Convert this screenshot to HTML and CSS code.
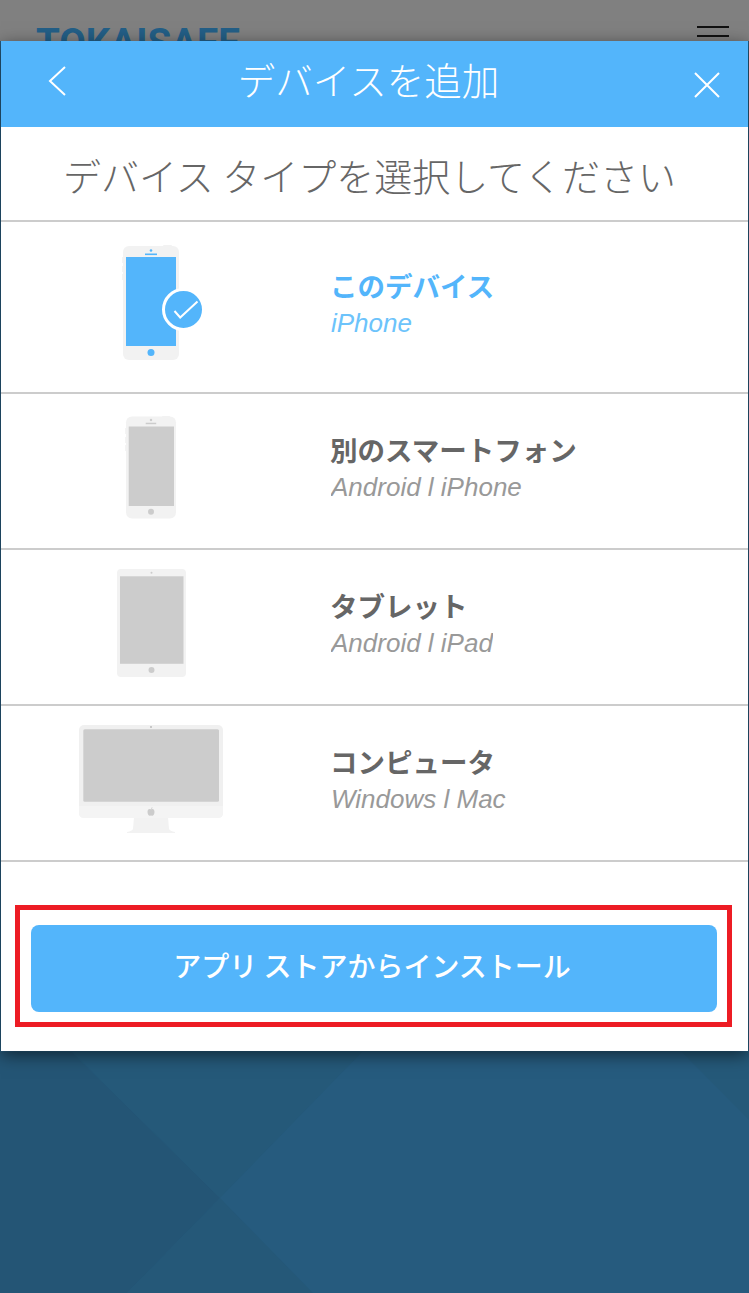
FILE: index.html
```html
<!DOCTYPE html>
<html lang="ja">
<head>
    <meta charset="UTF-8">
    <meta name="viewport" content="width=device-width, initial-scale=1.0">
    <title>デバイスを追加</title>
    <link rel="stylesheet" href="styles.css">
</head>
<body>
    <svg class="backdrop" viewBox="0 0 749 1293" aria-hidden="true">
        <polygon class="shade-left" points="0,1052 72,1052 220,1198 127,1293 0,1293"/>
        <polygon class="shade-top" points="72,1052 362,1052 220,1198"/>
        <polygon class="shade-bottom" points="220,1198 313,1293 127,1293"/>
        <polygon class="shade-top" points="682,1052 749,1052 749,1120"/>
    </svg>
    <header class="topbar">
        <span class="logo">TOKAISAFE</span>
        <div class="burger"><span></span><span></span><span></span></div>
    </header>
    <main class="modal">
        <div class="modal-head">
            <svg class="head-icon back" width="18" height="30" viewBox="0 0 18 30"><path d="M17 1 L2 15 L17 29" /></svg>
            <h1>デバイスを追加</h1>
            <svg class="head-icon" width="26" height="26" viewBox="0 0 26 26"><path d="M1 1 L25 25 M25 1 L1 25" /></svg>
        </div>
        <h2 class="prompt">デバイス タイプを選択してください</h2>

        <div class="device active first">
            <div class="device-icon">
                <svg width="84" height="116" viewBox="0 0 84 116">
                    <rect x="0.2" y="12" width="2" height="6" fill="#f2f2f2"/>
                    <rect x="0.2" y="21" width="2" height="6" fill="#f2f2f2"/>
                    <rect x="0.2" y="29" width="2" height="6" fill="#f2f2f2"/>
                    <rect x="41" y="0" width="9" height="3" rx="1" fill="#f2f2f2"/>
                    <rect x="1" y="1" width="56" height="114" rx="6" fill="#f2f2f2"/>
                    <rect x="4" y="12" width="50" height="89" fill="#53b5fb"/>
                    <circle cx="29" cy="5.5" r="1.3" fill="#53b5fb"/>
                    <rect x="23" y="8.5" width="12" height="1.6" fill="#53b5fb"/>
                    <circle cx="29" cy="107.5" r="3.5" fill="#53b5fb"/>
                    <circle cx="61.5" cy="64.5" r="20" fill="#53b5fb" stroke="#fff" stroke-width="3"/>
                    <path d="M52.5 66 L58.2 72.5 L75.5 56.5" fill="none" stroke="#fff" stroke-width="2"/>
                </svg>
            </div>
            <div class="device-text">
                <strong>このデバイス</strong>
                <em>iPhone</em>
            </div>
        </div>

        <div class="device">
            <div class="device-icon">
                <svg class="phone" width="50" height="103" viewBox="0 0 50 103">
                    <rect x="-0.8" y="12" width="2" height="6" fill="#f2f2f2"/>
                    <rect x="-0.8" y="21" width="2" height="6" fill="#f2f2f2"/>
                    <rect x="-0.8" y="29" width="2" height="6" fill="#f2f2f2"/>
                    <rect x="36" y="0" width="8" height="2" rx="1" fill="#f2f2f2"/>
                    <rect x="0" y="0.5" width="50" height="102" rx="6" fill="#f2f2f2"/>
                    <rect x="2.7" y="10.5" width="45.3" height="79.5" fill="#ccc"/>
                    <circle cx="25" cy="4" r="1.2" fill="#ccc"/>
                    <rect x="19.7" y="6.7" width="10.5" height="1.5" fill="#ccc"/>
                    <circle cx="25" cy="95.8" r="3" fill="#ccc"/>
                </svg>
            </div>
            <div class="device-text">
                <strong>別のスマートフォン</strong>
                <em>Android l iPhone</em>
            </div>
        </div>

        <div class="device">
            <div class="device-icon">
                <svg width="69" height="108" viewBox="0 0 69 108">
                    <rect x="0" y="0" width="69" height="108" rx="4" fill="#f2f2f2"/>
                    <rect x="3" y="7.3" width="63.5" height="87.5" fill="#ccc"/>
                    <circle cx="34.5" cy="3.7" r="1" fill="#ccc"/>
                    <circle cx="34.5" cy="101" r="3" fill="#ccc"/>
                </svg>
            </div>
            <div class="device-text">
                <strong>タブレット</strong>
                <em>Android l iPad</em>
            </div>
        </div>

        <div class="device">
            <div class="device-icon">
                <svg width="144" height="108" viewBox="0 0 144 108">
                    <path d="M55 92 H89 L90 104 Q91 106 96 107 V108 H48 V107 Q53 106 54 104 Z" fill="#f2f2f2"/>
                    <rect x="0" y="0" width="144" height="93" rx="5" fill="#f0f0f0"/>
                    <path d="M0 81 H144 V88 Q144 93 139 93 H5 Q0 93 0 88 Z" fill="#f4f4f4"/>
                    <rect x="4.3" y="4.3" width="135.7" height="72.4" rx="1.5" fill="#ccc"/>
                    <circle cx="72" cy="2" r="1" fill="#bbb"/>
                    <path d="M72 84.5 C70 83.5 68.5 84.5 68.5 87 C68.5 89.5 70 91 71 90.7 L72 90.4 L73 90.7 C74 91 75.5 89.5 75.5 87 C75.5 84.5 74 83.5 72 84.5 Z M72 84 C72 83 72.6 82.4 73.5 82.2 C73.5 83.2 73 83.9 72 84 Z" fill="#ccc"/>
                </svg>
            </div>
            <div class="device-text">
                <strong>コンピュータ</strong>
                <em>Windows l Mac</em>
            </div>
        </div>

        <div class="callout">
            <button class="install">アプリ ストアからインストール</button>
        </div>
    </main>
</body>
</html>
```

FILE: styles.css
```css
html, body {
    margin: 0;
    padding: 0;
}
body {
    position: relative;
    width: 749px;
    height: 1293px;
    overflow: hidden;
    background: #265b7e;
    font-family: "Noto Sans CJK JP", "Liberation Sans", sans-serif;
}
h1, h2 {
    margin: 0;
    font-weight: 300;
}

.backdrop {
    position: absolute;
    top: 0;
    left: 0;
    width: 749px;
    height: 1293px;
}
.shade-left {
    fill: #245575;
}
.shade-top {
    fill: #255979;
}
.shade-bottom {
    fill: #255878;
}

.topbar {
    position: relative;
    height: 41px;
    overflow: hidden;
    background: #808080;
}
.logo {
    position: absolute;
    left: 36px;
    top: 23px;
    font-family: Roboto, "Liberation Sans", sans-serif;
    font-size: 38.5px;
    font-weight: 700;
    line-height: 40px;
    color: #235f87;
}
.burger {
    position: absolute;
    left: 697px;
    top: 26px;
}
.burger span {
    display: block;
    width: 32px;
    height: 2px;
    margin-bottom: 7px;
    background: #111;
}

.modal {
    position: relative;
    margin: 0 1px;
    width: 747px;
    height: 1010px;
    background: #fff;
    box-shadow: 0 4px 16px rgba(0, 0, 0, 0.55);
}
.modal-head {
    display: flex;
    align-items: center;
    justify-content: space-between;
    height: 86px;
    padding: 0 28px 0 47px;
    box-sizing: border-box;
    background: #53b5fb;
    color: #fff;
}
.modal-head h1 {
    font-size: 37.5px;
    line-height: 76px;
    margin: 0 0 10px -23px;
}
.head-icon {
    fill: none;
    stroke: #fff;
    stroke-width: 2;
    margin-top: 2px;
}
.head-icon.back {
    margin-top: -6px;
}
.prompt {
    height: 95px;
    box-sizing: border-box;
    padding-right: 10px;
    border-bottom: 2px solid #ccc;
    font-size: 38px;
    line-height: 96px;
    text-align: center;
    color: #666;
}

.device {
    display: grid;
    grid-template-columns: 300px 1fr;
    align-items: center;
    height: 156px;
    box-sizing: border-box;
    border-bottom: 2px solid #ccc;
}
.device.first {
    height: 172px;
}
.device-icon {
    display: flex;
    justify-content: center;
    padding-bottom: 8px;
}
.device.first .device-icon {
    padding-left: 26px;
}
.phone {
    overflow: visible;
}
.device-text {
    padding: 0 0 5px 30px;
}
.device-text strong {
    display: block;
    margin: -2px 0 2px -1px;
    font-size: 27.5px;
    line-height: 36px;
    font-weight: 700;
    color: #666;
}
.device-text em {
    display: block;
    width: fit-content;
    overflow: hidden;
    font-family: "Liberation Sans", sans-serif;
    font-size: 26px;
    line-height: 36px;
    color: #999;
}
.device.active strong {
    color: #53b5fb;
}
.device.active em {
    color: #6cc3fb;
}

.callout {
    margin: 43px 16px 0 14px;
    padding: 15px 10px 10px 11px;
    border: 5px solid #ed1c24;
}
.install {
    display: block;
    width: 100%;
    height: 87px;
    padding: 0 4px 8px 0;
    border: none;
    border-radius: 8px;
    background: #53b5fb;
    color: #fff;
    font-family: "Noto Sans CJK JP", sans-serif;
    font-size: 28px;
    font-weight: 500;
}
```
